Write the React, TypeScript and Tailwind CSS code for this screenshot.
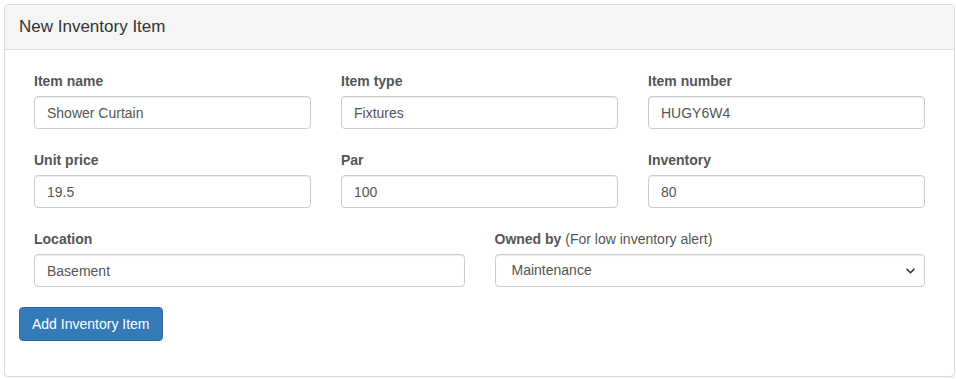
import React from "react";

const font = { fontFamily: '"Liberation Sans", Arial, Helvetica, sans-serif' };

function Field({ label, value, extra }: { label: string; value: string; extra?: string }) {
  return (
    <div className="flex flex-col">
      <label className="h-[20px] mb-[5px] text-[14px] leading-[20px] font-bold text-[#555]">
        {label}
        {extra ? <span className="font-normal">{extra}</span> : null}
      </label>
      <input
        readOnly
        value={value}
        className="h-[33px] w-full rounded-[4px] border border-[#ccc] bg-white px-[12px] text-[14px] text-[#555] shadow-[inset_0_1px_1px_rgba(0,0,0,0.075)] outline-none"
      />
    </div>
  );
}

export default function App() {
  return (
    <div className="min-h-[379px] w-[956px] bg-white pl-[4px] pt-[4px]" style={font}>
      <div className="w-[951px] rounded-[4px] border border-[#ddd] bg-white shadow-[0_1px_1px_rgba(0,0,0,0.05)]">
        <div className="flex h-[45px] items-center rounded-t-[3px] border-b border-[#ddd] bg-[#f5f5f5] px-[14px] text-[17px] text-[#333]">
          New Inventory Item
        </div>
        <div className="px-[14px] pt-[21px] pb-[35px]">
          <div className="px-[15px]">
            <div className="grid grid-cols-3 gap-x-[30px] mb-[21px]">
              <Field label="Item name" value="Shower Curtain" />
              <Field label="Item type" value="Fixtures" />
              <Field label="Item number" value="HUGY6W4" />
            </div>
            <div className="grid grid-cols-3 gap-x-[30px] mb-[21px]">
              <Field label="Unit price" value="19.5" />
              <Field label="Par" value="100" />
              <Field label="Inventory" value="80" />
            </div>
            <div className="grid grid-cols-2 gap-x-[30px] mb-[20px]">
              <Field label="Location" value="Basement" />
              <div className="flex flex-col">
                <label className="h-[20px] mb-[5px] text-[14px] leading-[20px] font-bold text-[#555]">
                  Owned by<span className="font-normal"> (For low inventory alert)</span>
                </label>
                <div className="relative flex h-[33px] w-full items-center rounded-[4px] border border-[#ccc] bg-white px-[16px] text-[14px] text-[#555] shadow-[inset_0_1px_1px_rgba(0,0,0,0.075)]">
                  Maintenance
                  <svg
                    className="absolute right-[9px] top-[13px]"
                    width="9"
                    height="6"
                    viewBox="0 0 9 6"
                    fill="none"
                  >
                    <path d="M1 1.2L4.5 4.7L8 1.2" stroke="#333" strokeWidth="1.6" strokeLinecap="round" strokeLinejoin="round" />
                  </svg>
                </div>
              </div>
            </div>
          </div>
          <button className="h-[34px] rounded-[4px] border border-[#2e6da4] bg-[#337ab7] px-[12px] text-[14px] text-white">
            Add Inventory Item
          </button>
        </div>
      </div>
    </div>
  );
}
